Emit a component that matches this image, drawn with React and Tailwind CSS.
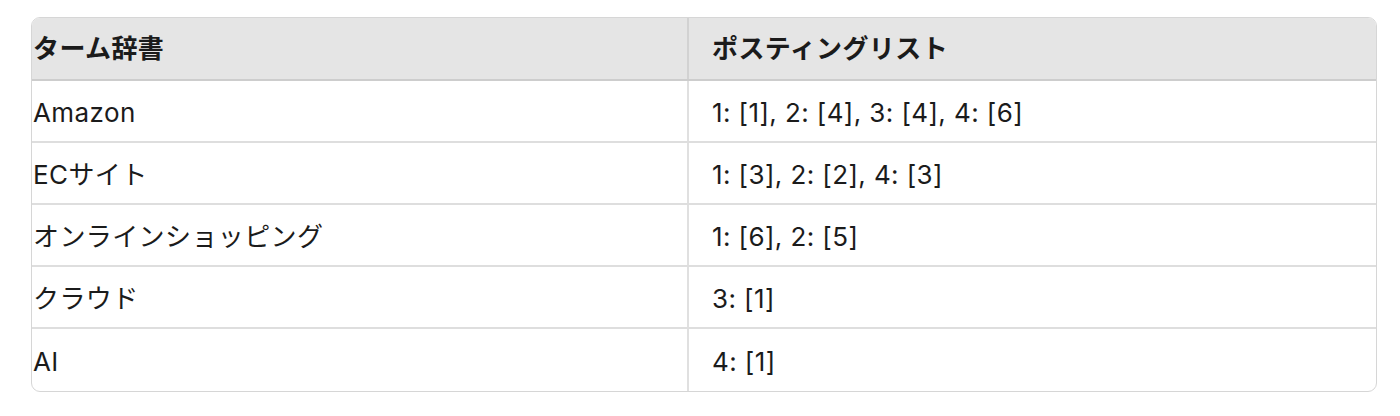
import React from "react";

const rows = [
  ["Amazon", "1: [1], 2: [4], 3: [4], 4: [6]"],
  ["ECサイト", "1: [3], 2: [2], 4: [3]"],
  ["オンラインショッピング", "1: [6], 2: [5]"],
  ["クラウド", "3: [1]"],
  ["AI", "4: [1]"],
];

export default function App() {
  return (
    <div
      className="w-[1400px] h-[416px] bg-white pt-[17px] pl-[31px]"
      style={{ fontFamily: '"Inter", "Noto Sans CJK JP", sans-serif' }}
    >
      <div className="w-[1346px] rounded-[9px] border border-[#d6d6d6] overflow-hidden text-[26px] tracking-[0.4px] text-[#1b1b1b]">
        <div className="grid grid-cols-[657px_1fr] h-[63px] bg-[#e5e5e5] border-b-2 border-[#cdcdcd] font-semibold">
          <div className="flex items-center pl-[1px] border-r-2 border-[#d2d2d2]">ターム辞書</div>
          <div className="flex items-center pl-[23px]">ポスティングリスト</div>
        </div>
        {rows.map(([a, b], i) => (
          <div
            key={i}
            className={`grid grid-cols-[657px_1fr] h-[62px] ${i < rows.length - 1 ? "border-b-2 border-[#dedede]" : ""}`}
          >
            <div className="flex items-center pl-[1px] pt-[2px] border-r-2 border-[#e0e0e0]">{a}</div>
            <div className="flex items-center pl-[23px] pt-[2px]">{b}</div>
          </div>
        ))}
      </div>
    </div>
  );
}
